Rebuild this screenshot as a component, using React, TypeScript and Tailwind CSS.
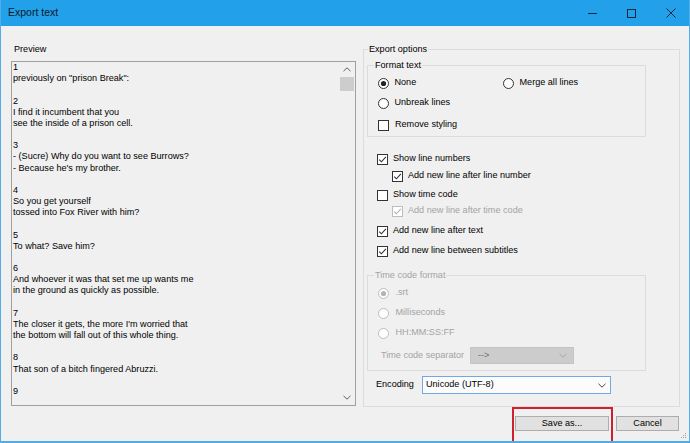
import React from 'react';

const previewText = `1
previously on "prison Break":

2
I find it incumbent that you
see the inside of a prison cell.

3
- (Sucre) Why do you want to see Burrows?
- Because he's my brother.

4
So you get yourself
tossed into Fox River with him?

5
To what? Save him?

6
And whoever it was that set me up wants me
in the ground as quickly as possible.

7
The closer it gets, the more I'm worried that
the bottom will fall out of this whole thing.

8
That son of a bitch fingered Abruzzi.

9
`;

function Radio({ checked = false, disabled = false }: { checked?: boolean; disabled?: boolean }) {
	const stroke = disabled ? '#bcbcbc' : '#333333';
	return (
		<svg width="11" height="11" viewBox="0 0 11 11" className="shrink-0">
			<circle cx="5.5" cy="5.5" r="5" fill="#ffffff" stroke={stroke} strokeWidth="1" />
			{checked && <circle cx="5.5" cy="5.5" r="2.6" fill={disabled ? '#b4b4b4' : '#222222'} />}
		</svg>
	);
}

function Check({ checked = false, disabled = false }: { checked?: boolean; disabled?: boolean }) {
	const stroke = disabled ? '#bcbcbc' : '#333333';
	return (
		<svg width="11" height="11" viewBox="0 0 11 11" className="shrink-0">
			<rect x="0.5" y="0.5" width="10" height="10" fill="#ffffff" stroke={stroke} strokeWidth="1" />
			{checked && (
				<path d="M2.2 5.6 L4.4 7.8 L8.9 2.9" fill="none" stroke={disabled ? '#b0b0b0' : '#333333'} strokeWidth="1.1" />
			)}
		</svg>
	);
}

function Chevron({ color = '#333333' }: { color?: string }) {
	return (
		<svg width="8" height="5" viewBox="0 0 8 5">
			<path d="M0.5 0.8 L4 4.2 L7.5 0.8" fill="none" stroke={color} strokeWidth="1" />
		</svg>
	);
}

export default function App() {
	return (
		<div className="relative flex h-[443px] w-[690px] flex-col overflow-hidden border-x border-b-2 border-[#52ace6] bg-[#f0f0f0] font-['Liberation_Sans',Arial,sans-serif] text-[9.1px] text-black">
			{/* title bar */}
			<div className="-mx-px flex h-[26px] shrink-0 items-center bg-[#22a0ea]">
				<span className="pl-[8px] text-[10.5px] text-[#0a1a2a]">Export text</span>
				<div className="ml-auto flex h-full">
					<div className="flex w-[39px] items-center justify-center">
						<div className="h-px w-[9px] bg-[#10263a]" />
					</div>
					<div className="flex w-[39px] items-center justify-center">
						<div className="h-[9px] w-[9px] border border-[#10263a]" />
					</div>
					<div className="flex w-[39px] items-center justify-center">
						<svg width="10" height="10" viewBox="0 0 10 10">
							<path d="M0.5 0.5 L9.5 9.5 M9.5 0.5 L0.5 9.5" stroke="#10263a" strokeWidth="1" />
						</svg>
					</div>
				</div>
			</div>

			<div className="flex gap-[7px] pl-[10px] pt-[18px]">
				{/* preview */}
				<div className="flex w-[345px] flex-col">
					<span className="pl-[3px] leading-[11px]">Preview</span>
					<div className="mt-[6px] flex h-[345px] border border-[#a0a0a0] bg-[#f0f0f0]">
						<div className="flex-1 overflow-hidden whitespace-pre pl-[1px] leading-[11.17px]">{previewText}</div>
						<div className="flex w-[16px] flex-col">
							<div className="flex h-[15px] items-center justify-center rotate-180">
								<Chevron color="#606060" />
							</div>
							<div className="mx-[1px] h-[14px] bg-[#cdcdcd]" />
							<div className="flex-1" />
							<div className="flex h-[15px] items-center justify-center">
								<Chevron color="#606060" />
							</div>
						</div>
					</div>
				</div>

				{/* options */}
				<div className="flex w-[317px] flex-col">
					<fieldset className="h-[363px] border border-[#dcdcdc] pl-px">
						<legend className="ml-[3px] px-[1px] leading-[11px]">Export options</legend>

						<fieldset className="ml-[2px] mt-[5px] w-[279px] border border-[#dcdcdc] pb-[1px]">
							<legend className="ml-[6px] px-[1px] leading-[11px]">Format text</legend>
							<div className="mt-[2px] grid grid-cols-[125px_1fr] pl-[9.5px]">
								<label className="flex h-[20px] items-center gap-[6px]">
									<Radio checked />
									None
								</label>
								<label className="flex h-[20px] items-center gap-[6px]">
									<Radio />
									Merge all lines
								</label>
								<label className="col-span-2 flex h-[20px] items-center gap-[6px]">
									<Radio />
									Unbreak lines
								</label>
								<label className="col-span-2 mt-[2px] flex h-[20px] items-center gap-[6px] pl-[0.5px]">
									<Check />
									Remove styling
								</label>
							</div>
						</fieldset>

						<div className="flex flex-col pl-[12px]">
							<label className="mt-[15px] flex h-[14px] items-center gap-[5px]">
								<Check checked />
								Show line numbers
							</label>
							<label className="ml-[15px] mt-[3px] flex h-[14px] items-center gap-[5px]">
								<Check checked />
								Add new line after line number
							</label>
							<label className="mt-[5px] flex h-[14px] items-center gap-[5px]">
								<Check />
								Show time code
							</label>
							<label className="ml-[15px] mt-[2px] flex h-[14px] items-center gap-[5px] text-[#a3a3a3]">
								<Check checked disabled />
								Add new line after time code
							</label>
							<label className="mt-[6px] flex h-[14px] items-center gap-[5px]">
								<Check checked />
								Add new line after text
							</label>
							<label className="mt-[6px] flex h-[14px] items-center gap-[5px]">
								<Check checked />
								Add new line between subtitles
							</label>
						</div>

						<fieldset className="ml-[2px] mt-[12px] w-[279px] border border-[#dcdcdc] pb-[6px] text-[#a3a3a3]">
							<legend className="ml-[6px] px-[1px] leading-[11px]">Time code format</legend>
							<div className="mt-[2px] flex flex-col pl-[9.5px]">
								<label className="flex h-[20px] items-center gap-[7px]">
									<Radio checked disabled />
									.srt
								</label>
								<label className="flex h-[20px] items-center gap-[7px]">
									<Radio disabled />
									Milliseconds
								</label>
								<label className="flex h-[20px] items-center gap-[7px]">
									<Radio disabled />
									HH:MM:SS:FF
								</label>
							</div>
							<div className="mt-[4px] flex items-center pl-[13px]">
								<span className="w-[89px]">Time code separator</span>
								<div className="flex h-[17px] w-[104px] items-center justify-between border border-[#c4c4c4] bg-[#cccccc] pl-[7px] pr-[6px] text-[#6d6d6d]">
									<span>--&gt;</span>
									<Chevron color="#a8a8a8" />
								</div>
							</div>
						</fieldset>

						<div className="mt-[5px] flex items-center pl-[11px]">
							<span className="w-[46px]">Encoding</span>
							<div className="flex h-[18px] w-[189px] items-center justify-between border border-[#6ea9e3] bg-[#fcfcfc] pl-[3px] pr-[4px]">
								<span>Unicode (UTF-8)</span>
								<Chevron color="#444444" />
							</div>
						</div>
					</fieldset>

					<div className="mr-[1px] mt-[9px] flex justify-end gap-[7px]">
						<button className="flex h-[15px] w-[94px] items-center justify-center border border-[#adadad] bg-[#e1e1e1]">
							Save as...
						</button>
						<button className="flex h-[15px] w-[63px] items-center justify-center border border-[#adadad] bg-[#e1e1e1]">
							Cancel
						</button>
					</div>
				</div>
			</div>

			{/* highlight round the save button */}
			<div className="absolute left-[511px] top-[407px] h-[40px] w-[101px] border-2 border-[#d0202e]" />

			{/* size grip */}
			<svg className="absolute bottom-[2px] right-[2px]" width="7" height="7" viewBox="0 0 7 7">
				<rect x="5" y="1" width="1" height="1" fill="#a0a0a0" />
				<rect x="3" y="3" width="1" height="1" fill="#a0a0a0" />
				<rect x="5" y="3" width="1" height="1" fill="#a0a0a0" />
				<rect x="1" y="5" width="1" height="1" fill="#a0a0a0" />
				<rect x="3" y="5" width="1" height="1" fill="#a0a0a0" />
				<rect x="5" y="5" width="1" height="1" fill="#a0a0a0" />
			</svg>
		</div>
	);
}
